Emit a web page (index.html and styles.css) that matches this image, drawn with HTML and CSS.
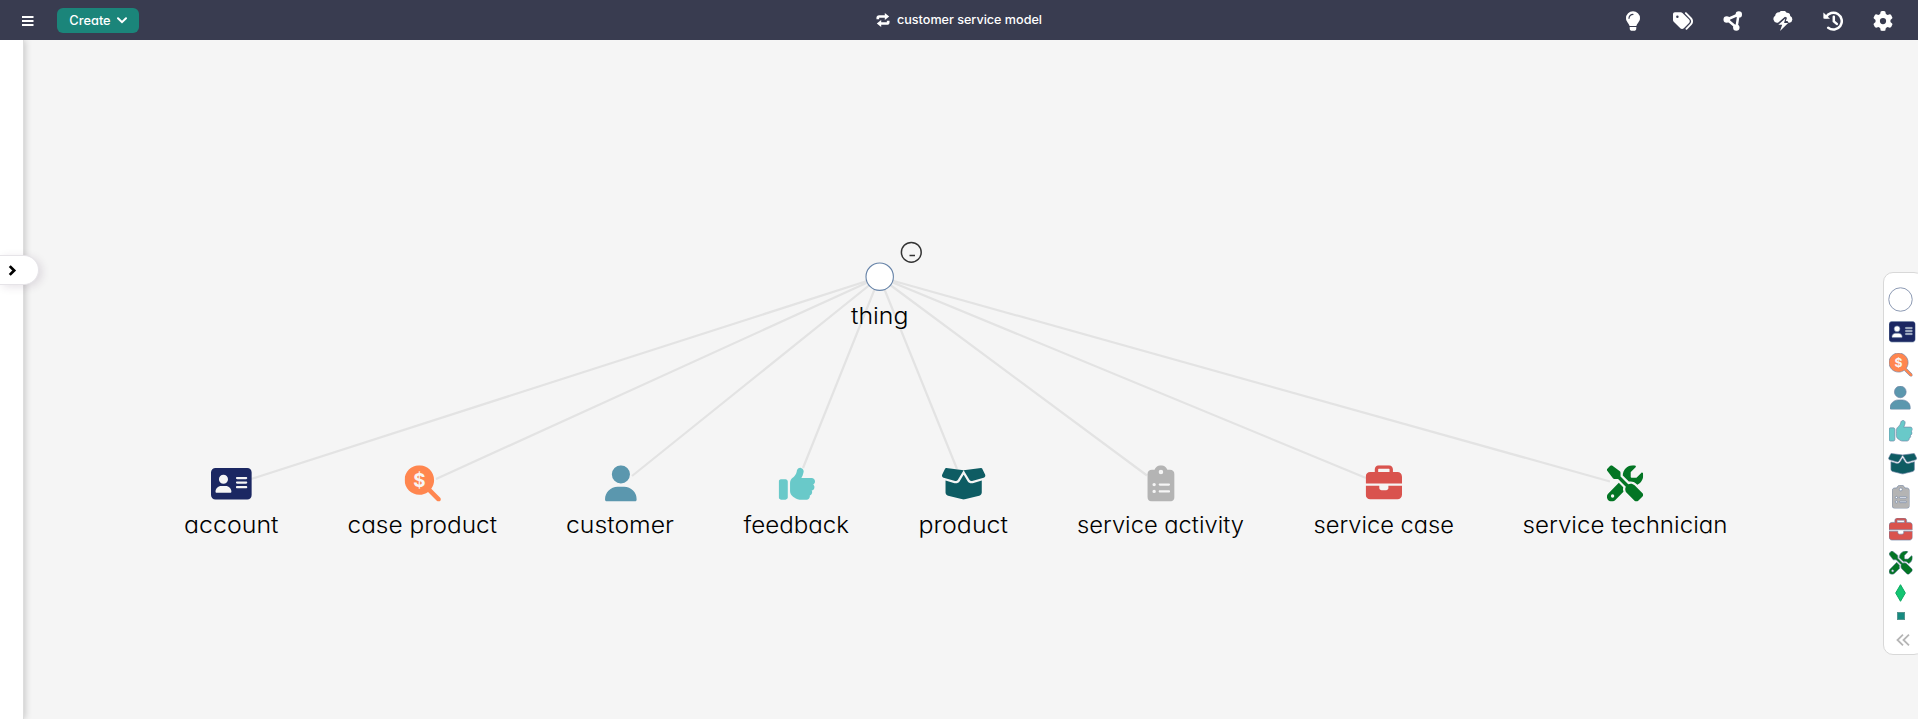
FILE: index.html
```html
<!DOCTYPE html>
<html lang="en">
<head>
<meta charset="utf-8">
<title>customer service model</title>
<link rel="stylesheet" href="styles.css">
</head>
<body>
<svg class="defs" width="0" height="0">
  <symbol id="card" viewBox="0 0 576 512"><path d="M64 32C28.7 32 0 60.7 0 96V416c0 35.3 28.7 64 64 64H512c35.3 0 64-28.7 64-64V96c0-35.3-28.7-64-64-64H64zm80 256h64c44.2 0 80 35.8 80 80c0 8.8-7.2 16-16 16H80c-8.8 0-16-7.2-16-16c0-44.2 35.8-80 80-80zm-32-96a64 64 0 1 1 128 0 64 64 0 1 1 -128 0zm256-32H496c8.8 0 16 7.2 16 16s-7.2 16-16 16H368c-8.8 0-16-7.2-16-16s7.2-16 16-16zm0 64H496c8.8 0 16 7.2 16 16s-7.2 16-16 16H368c-8.8 0-16-7.2-16-16s7.2-16 16-16zm0 64H496c8.8 0 16 7.2 16 16s-7.2 16-16 16H368c-8.8 0-16-7.2-16-16s7.2-16 16-16z"/></symbol>
  <symbol id="search" viewBox="0 0 512 512"><path d="M416 208c0 45.900-14.900 88.300-40 122.700L502.600 457.400c12.500 12.500 12.500 32.800 0 45.300s-32.800 12.500-45.300 0L330.700 376C296.300 401.200 253.900 416 208 416C93.100 416 0 322.900 0 208S93.100 0 208 0S416 93.100 416 208z"/><text class="coin" x="208" y="304" text-anchor="middle">$</text></symbol>
  <symbol id="user" viewBox="0 0 448 512"><path d="M224 256A128 128 0 1 0 224 0a128 128 0 1 0 0 256zm-45.700 48C79.800 304 0 383.800 0 482.300C0 498.700 13.300 512 29.700 512H418.300c16.400 0 29.700-13.300 29.700-29.700C448 383.800 368.200 304 269.700 304H178.300z"/></symbol>
  <symbol id="thumb" viewBox="0 0 512 512"><path d="M313.4 32.9c26 5.2 42.9 30.5 37.7 56.5l-2.3 11.4c-5.3 26.7-15.1 52.1-28.8 75.2H464c26.5 0 48 21.5 48 48c0 18.5-10.5 34.6-25.9 42.6C497 275.4 504 288.9 504 304c0 23.4-16.8 42.9-38.9 47.1c4.4 7.3 6.9 15.8 6.9 24.9c0 21.3-13.9 39.4-33.1 45.6c.7 3.3 1.1 6.8 1.1 10.4c0 26.5-21.5 48-48 48H294.5c-19 0-37.5-5.6-53.3-16.1l-38.5-25.7C176 420.4 160 390.4 160 358.3V320 272 247.1c0-29.2 13.3-56.7 36-75l7.4-5.9c26.5-21.2 44.6-51 51.2-84.2l2.3-11.4c5.2-26 30.5-42.9 56.5-37.7zM32 192H96c17.7 0 32 14.3 32 32V448c0 17.7-14.3 32-32 32H32c-17.7 0-32-14.3-32-32V224c0-17.7 14.3-32 32-32z"/></symbol>
  <symbol id="box" viewBox="0 0 640 512"><path d="M58.9 42.1c3-6.1 9.6-9.6 16.3-8.7L320 64 564.8 33.4c6.7-.8 13.3 2.7 16.3 8.7l41.7 83.4c9 17.9-.6 39.6-19.8 45.1L439.6 217.3c-13.9 4-28.8-1.9-36.2-14.3L320 64 236.6 203c-7.4 12.4-22.3 18.3-36.2 14.3L37.1 170.6c-19.3-5.5-28.8-27.2-19.8-45.1L58.9 42.1zM321.1 128l54.9 91.4c14.9 24.8 44.6 36.6 72.5 28.6L576 211.6v167c0 22-15 41.2-36.4 46.6l-204.1 51c-10.2 2.6-20.9 2.6-31 0l-204.1-51C79 419.7 64 400.5 64 378.500v-167L191.6 248c27.8 8 57.6-3.8 72.5-28.6L318.9 128h2.2z"/></symbol>
  <symbol id="clip" viewBox="0 0 384 512"><path d="M192 0c-41.800 0-77.400 26.700-90.500 64H64C28.700 64 0 92.700 0 128V448c0 35.300 28.700 64 64 64H320c35.300 0 64-28.700 64-64V128c0-35.300-28.700-64-64-64H282.500C269.400 26.700 233.800 0 192 0zm0 64a32 32 0 1 1 0 64 32 32 0 1 1 0-64zM72 272a24 24 0 1 1 48 0 24 24 0 1 1 -48 0zm104-16H304c8.800 0 16 7.200 16 16s-7.200 16-16 16H176c-8.800 0-16-7.200-16-16s7.200-16 16-16zM72 368a24 24 0 1 1 48 0 24 24 0 1 1 -48 0zm88 0c0-8.800 7.200-16 16-16H304c8.800 0 16 7.200 16 16s-7.200 16-16 16H176c-8.800 0-16-7.200-16-16z"/></symbol>
  <symbol id="case" viewBox="0 0 512 512"><path d="M184 48H328c4.400 0 8 3.600 8 8V96H176V56c0-4.400 3.600-8 8-8zm-56 8V96H64C28.700 96 0 124.700 0 160v96H512V160c0-35.300-28.700-64-64-64H384V56c0-30.900-25.100-56-56-56H184c-30.900 0-56 25.100-56 56zM512 288H320v32c0 17.700-14.300 32-32 32H224c-17.700 0-32-14.300-32-32V288H0V416c0 35.300 28.700 64 64 64H448c35.300 0 64-28.700 64-64V288z"/></symbol>
  <symbol id="tools" viewBox="0 0 512 512"><path d="M78.6 5C69.1-2.4 55.6-1.5 47 7L7 47c-8.5 8.5-9.4 22-2.1 31.6l80 104c4.5 5.9 11.6 9.4 19 9.4h54.1l109 109c-14.7 29-10 65.4 14.3 89.6l112 112c12.5 12.5 32.8 12.5 45.3 0l64-64c12.5-12.5 12.5-32.8 0-45.3l-112-112c-24.2-24.2-60.6-29-89.6-14.3l-109-109V104c0-7.5-3.5-14.5-9.4-19L78.6 5zM19.9 396.1C7.2 408.8 0 426.1 0 444.1C0 481.6 30.4 512 67.9 512c18 0 35.3-7.2 48-19.9L233.7 374.3c-7.8-20.9-9-43.6-3.6-65.1l-61.7-61.7L19.9 396.1zM512 144c0-10.5-1.1-20.7-3.2-30.5c-2.4-11.2-16.1-14.1-24.2-6l-63.9 63.9c-3 3-7.1 4.7-11.3 4.7H352c-8.8 0-16-7.2-16-16V102.6c0-4.2 1.7-8.3 4.7-11.3l63.9-63.9c8.1-8.1 5.2-21.8-6-24.2C388.7 1.1 378.5 0 368 0C288.500 0 224 64.500 224 144l0 .8 85.300 85.300c36-9.100 75.800 .5 104 28.700L429 274.500c49-23 83-72.800 83-130.500zM56 432a24 24 0 1 1 48 0 24 24 0 1 1 -48 0z"/></symbol>
</svg>

<header class="topbar">
  <div class="left">
    <svg class="burger" viewBox="0 0 12 10"><path d="M0 1h11.500M0 5h11.500M0 9h11.500"/></svg>
    <button class="create">Create <svg class="caret" viewBox="0 0 10 7"><path d="M1 1.200l4 4 4-4"/></svg></button>
  </div>
  <div class="model">
    <svg class="swap" viewBox="0 0 14 14"><path class="ln" d="M1.800 6.300V4.800Q1.800 3.500 3.200 3.500H9.500M12.200 7.700v1.500q0 1.300-1.400 1.300H4.500"/><path d="M8.800 0L13.200 3.500 8.800 7zM5.200 7L.8 10.500l4.400 3.500z"/></svg>
    <svg class="title" width="146" height="20"><text x="0" y="14" textLength="145" lengthAdjust="spacingAndGlyphs">customer service model</text></svg>
  </div>
  <nav class="tools">
    <svg viewBox="0 0 20 20"><path d="M10 0.300a7 7 0 0 0-7 7c0 3.200 2.800 4.900 3.600 7.700h6.800c.8-2.800 3.600-4.500 3.600-7.700a7 7 0 0 0-7-7zM6.700 16h6.600v1.200a2.600 2.600 0 0 1-2.600 2.600H9.300a2.600 2.600 0 0 1-2.600-2.600z"/><path class="cut" d="M6 7.300a4 4 0 0 1 4-4"/></svg>
    <svg viewBox="0 0 512 512"><path d="M345 39.1L472.8 168.4c52.4 53 52.4 138.2 0 191.2L360.8 472.9c-9.3 9.4-24.5 9.5-33.9 .2s-9.5-24.5-.2-33.9L438.6 325.9c33.9-34.3 33.9-89.4 0-123.7L310.9 72.9c-9.3-9.4-9.2-24.6 .2-33.9s24.6-9.2 33.9 .2zM0 229.5V80C0 53.5 21.5 32 48 32H197.5c17 0 33.3 6.700 45.300 18.700l168 168c25 25 25 65.500 0 90.500L277.300 442.700c-25 25-65.500 25-90.500 0l-168-168C6.700 262.700 0 246.500 0 229.500zM144 144a32 32 0 1 0 -64 0 32 32 0 1 0 64 0z"/></svg>
    <svg viewBox="0 0 20 20"><path class="ln" d="M4 8.500L15.500 3.500L13.500 16.500z"/><circle cx="3.700" cy="8.500" r="3.200"/><circle cx="15.800" cy="3.400" r="3.200"/><circle cx="13.300" cy="16.600" r="3.200"/></svg>
    <svg viewBox="0 0 20 20"><path d="M3.800 11.800A3.800 3.800 0 0 1 2.200 4.800 4 4 0 0 1 6.500 1.200 4.300 4.300 0 0 1 13.600 1.700 3.400 3.400 0 0 1 17.200 5 3.600 3.600 0 0 1 16.500 11.800H15.500L14.500 10H12.800L14 6.800 12 5.800 5 11.800z"/><path d="M12.300 7.600L5.300 13.700h3.900l-2.200 6.200L15.200 12h-4.100z"/></svg>
    <svg viewBox="0 0 20 20"><path class="ln" d="M3 6.200A8.400 8.400 0 1 1 5.200 16.800M10.800 5.800v4.600l3 2.500"/><path d="M.4 1.400V7q0 .8.800.8H7z"/></svg>
    <svg viewBox="0 0 512 512"><path d="M495.9 166.6c3.2 8.7 .5 18.4-6.4 24.6l-43.3 39.4c1.1 8.3 1.7 16.8 1.7 25.4s-.6 17.1-1.7 25.4l43.3 39.4c6.9 6.2 9.6 15.9 6.4 24.6c-4.4 11.9-9.7 23.3-15.8 34.3l-4.7 8.1c-6.6 11-14 21.4-22.1 31.2c-5.9 7.2-15.7 9.6-24.5 6.800l-55.700-17.700c-13.400 10.300-28.200 18.900-44 25.400l-12.500 57.100c-2 9.100-9 16.300-18.200 17.800c-13.800 2.300-28 3.500-42.500 3.500s-28.700-1.200-42.500-3.500c-9.200-1.500-16.200-8.700-18.200-17.800l-12.500-57.100c-15.800-6.500-30.600-15.100-44-25.400L83.100 425.900c-8.800 2.800-18.600 .3-24.500-6.800c-8.100-9.800-15.500-20.200-22.100-31.200l-4.700-8.100c-6.100-11-11.400-22.400-15.800-34.300c-3.200-8.700-.5-18.400 6.400-24.600l43.300-39.400C64.600 273.100 64 264.600 64 256s.6-17.100 1.700-25.400L22.400 191.200c-6.900-6.200-9.600-15.900-6.400-24.600c4.400-11.900 9.700-23.300 15.800-34.300l4.700-8.100c6.600-11 14-21.400 22.100-31.200c5.900-7.200 15.700-9.600 24.500-6.800l55.700 17.700c13.400-10.300 28.200-18.900 44-25.400l12.500-57.100c2-9.100 9-16.300 18.200-17.800C227.300 1.200 241.500 0 256 0s28.700 1.200 42.500 3.500c9.200 1.500 16.200 8.700 18.200 17.800l12.500 57.100c15.800 6.500 30.600 15.100 44 25.400l55.700-17.700c8.800-2.800 18.600-.3 24.500 6.800c8.100 9.800 15.500 20.200 22.100 31.200l4.700 8.100c6.100 11 11.400 22.400 15.800 34.300zM256 336a80 80 0 1 0 0-160 80 80 0 1 0 0 160z"/></svg>
  </nav>
</header>

<main class="workspace">
  <aside class="drawer"><div class="handle"><svg viewBox="0 0 8 10"><path d="M1.500 1l4 4-4 4"/></svg></div></aside>
  <svg class="graph" viewBox="24 40 1894 679">
    <g class="edges">
      <path d="M879.500 277L251 479M879.500 277L436 479M879.500 277L632 476M879.500 277L803 468M879.500 277L957 469M879.500 277L1147 475.500M879.500 277L1366 478M879.500 277L1610 481.500"/>
    </g>
    <circle class="root" cx="879.700" cy="276.700" r="13.700"/>
    <circle class="collapse" cx="911.300" cy="252.300" r="9.900"/>
    <path class="minus" d="M909.500 255.500h5.500"/>
    <use href="#card" x="211" y="465.600" width="40.800" height="36.300" fill="#1b2762"/>
    <use href="#search" x="404.600" y="465.300" width="36.300" height="36.300" fill="#ff864f"/>
    <use href="#user" x="605" y="465.300" width="31.800" height="36.300" fill="#5b97ae"/>
    <use href="#thumb" x="778.700" y="465.600" width="36.300" height="36.300" fill="#69c9c9"/>
    <use href="#box" x="941" y="465.600" width="45.300" height="36.300" fill="#0e5c63"/>
    <use href="#clip" x="1147.300" y="465.300" width="27.300" height="36.300" fill="#b4b4b4"/>
    <use href="#case" x="1365.700" y="465.300" width="36.300" height="36.300" fill="#d9534e"/>
    <use href="#tools" x="1606.900" y="465.300" width="36.300" height="36.300" fill="#037524"/>
    <g class="labels">
      <text x="851" y="324" textLength="57.500" lengthAdjust="spacingAndGlyphs">thing</text>
      <text x="184" y="533" textLength="94.500" lengthAdjust="spacingAndGlyphs">account</text>
      <text x="347.500" y="533" textLength="149.500" lengthAdjust="spacingAndGlyphs">case product</text>
      <text x="566" y="533" textLength="108" lengthAdjust="spacingAndGlyphs">customer</text>
      <text x="743.500" y="533" textLength="105.500" lengthAdjust="spacingAndGlyphs">feedback</text>
      <text x="918.500" y="533" textLength="89.500" lengthAdjust="spacingAndGlyphs">product</text>
      <text x="1077" y="533" textLength="167" lengthAdjust="spacingAndGlyphs">service activity</text>
      <text x="1313.500" y="533" textLength="140.500" lengthAdjust="spacingAndGlyphs">service case</text>
      <text x="1522.500" y="533" textLength="205" lengthAdjust="spacingAndGlyphs">service technician</text>
    </g>
  </svg>
  <aside class="palette">
    <svg class="ring" viewBox="0 0 26 26"><circle cx="13" cy="13" r="12.200"/></svg>
    <svg class="item card"><use href="#card" fill="#1b2762"/></svg>
    <svg class="item"><use href="#search" fill="#ff864f"/></svg>
    <svg class="item user"><use href="#user" fill="#5b97ae"/></svg>
    <svg class="item"><use href="#thumb" fill="#69c9c9"/></svg>
    <svg class="item box"><use href="#box" fill="#0e5c63"/></svg>
    <svg class="item clip"><use href="#clip" fill="#b4b4b4"/></svg>
    <svg class="item"><use href="#case" fill="#d9534e"/></svg>
    <svg class="item"><use href="#tools" fill="#037524"/></svg>
    <svg class="diamond" viewBox="0 0 11 18"><path d="M5.500 .7L10.300 9 5.500 17.300 .7 9z"/></svg>
    <span class="square"></span>
    <svg class="fold" viewBox="0 0 14 12"><path d="M7 .7L1.500 6 7 11.300M13 .7L7.500 6 13 11.300"/></svg>
  </aside>
</main>
</body>
</html>
```
FILE: styles.css
```css
* { box-sizing: border-box; }
body {
  margin: 0;
  height: 719px;
  overflow: hidden;
  display: flex;
  flex-direction: column;
  background: #f5f5f5;
  font-family: Inter, "Open Sans", sans-serif;
  font-feature-settings: "cv11" 1;
}
svg { display: block; flex: none; }
.defs { position: absolute; }
.topbar {
  flex: none;
  height: 40px;
  background: #393c50;
  display: grid;
  grid-template-columns: 1fr auto 1fr;
  align-items: center;
  color: #fff;
}
.left { display: flex; align-items: center; padding-left: 22px; gap: 23px; }
.burger { width: 12px; height: 10px; margin-top: 1px; stroke: #fff; stroke-width: 2; }
.create {
  width: 82px;
  height: 25px;
  margin-top: 1px;
  border: 0;
  border-radius: 6px;
  padding: 0;
  background: #1b857a;
  color: #fff;
  font: 500 12.800px Inter, sans-serif;
  font-feature-settings: "cv11" 1;
  display: flex;
  align-items: center;
  justify-content: center;
  gap: 6px;
}
.caret { width: 10px; height: 7px; fill: none; stroke: #fff; stroke-width: 2; stroke-linecap: round; }
.model { display: flex; align-items: center; gap: 7px; }
.swap { width: 14px; height: 14px; fill: #fff; }
.swap .ln { fill: none; stroke: #fff; stroke-width: 2.700; }
.title { font-size: 12.300px; font-weight: 500; fill: #fff; }
.tools { display: flex; justify-content: flex-end; gap: 30px; padding-right: 25px; padding-top: 2px; }
.tools svg { width: 20px; height: 20px; fill: #fff; }
.tools .ln { fill: none; stroke: #fff; stroke-width: 2.500; stroke-linecap: round; stroke-linejoin: round; }
.tools .cut { fill: none; stroke: #393c50; stroke-width: 1.200; stroke-linecap: round; }
.workspace { flex: 1; display: flex; position: relative; min-height: 0; }
.drawer {
  flex: none;
  width: 24px;
  padding-top: 215px;
  border-right: 1px solid #ddd;
  background: #fff;
  box-shadow: 1px 0 7px rgba(0, 0, 0, .2);
  clip-path: inset(0 -30px 0 0);
}
.handle {
  width: 39px;
  height: 30px;
  border: 1px solid #e6e4e8;
  border-left: 0;
  border-radius: 0 15px 15px 0;
  background: #fff;
  box-shadow: 3px 2px 8px rgba(60, 30, 70, .13);
  display: flex;
  align-items: center;
  padding-left: 8px;
}
.handle svg { width: 9px; height: 11px; fill: none; stroke: #000; stroke-width: 2.500; }
.graph { width: 1894px; height: 679px; }
.edges { fill: none; stroke: #e3e3e3; stroke-width: 2.200; }
.root { fill: #fff; stroke: #6683a8; stroke-width: 1.100; }
.collapse { fill: none; stroke: #333; stroke-width: 1.500; }
.minus { stroke: #333; stroke-width: 1.500; }
.labels { font-size: 23px; font-weight: 300; fill: #000; }
.coin { font-family: Inter, sans-serif; font-size: 265px; font-weight: 700; fill: #f8f5f4; stroke: none; }
.palette {
  position: absolute;
  right: -6px;
  top: 232px;
  width: 41px;
  height: 383px;
  padding: 14px 6px 0 0;
  border: 1px solid #d8d8d8;
  border-radius: 10px;
  background: #fff;
  display: flex;
  flex-direction: column;
  align-items: center;
  gap: 9.400px;
}
.ring { width: 25px; height: 25px; margin-bottom: -1px; fill: #fff; stroke: #8896b0; }
.item { width: 23.500px; height: 23.500px; stroke: #6f83a5; stroke-width: 14; overflow: visible; }
.item.card { width: 26.400px; margin-right: -3px; }
.item.user { width: 20.600px; }
.item.box { width: 29.300px; margin-right: -5px; }
.item.clip { width: 17.600px; }
.diamond { width: 11px; height: 18px; fill: #13c572; stroke: #0ca860; }
.square { width: 8px; height: 8px; margin-top: 1px; background: #168b80; border: 1px solid #55958f; }
.fold { width: 14px; height: 12px; margin-top: 5px; margin-right: -5px; fill: none; stroke: #b5b5b5; stroke-width: 1.800; }
```
